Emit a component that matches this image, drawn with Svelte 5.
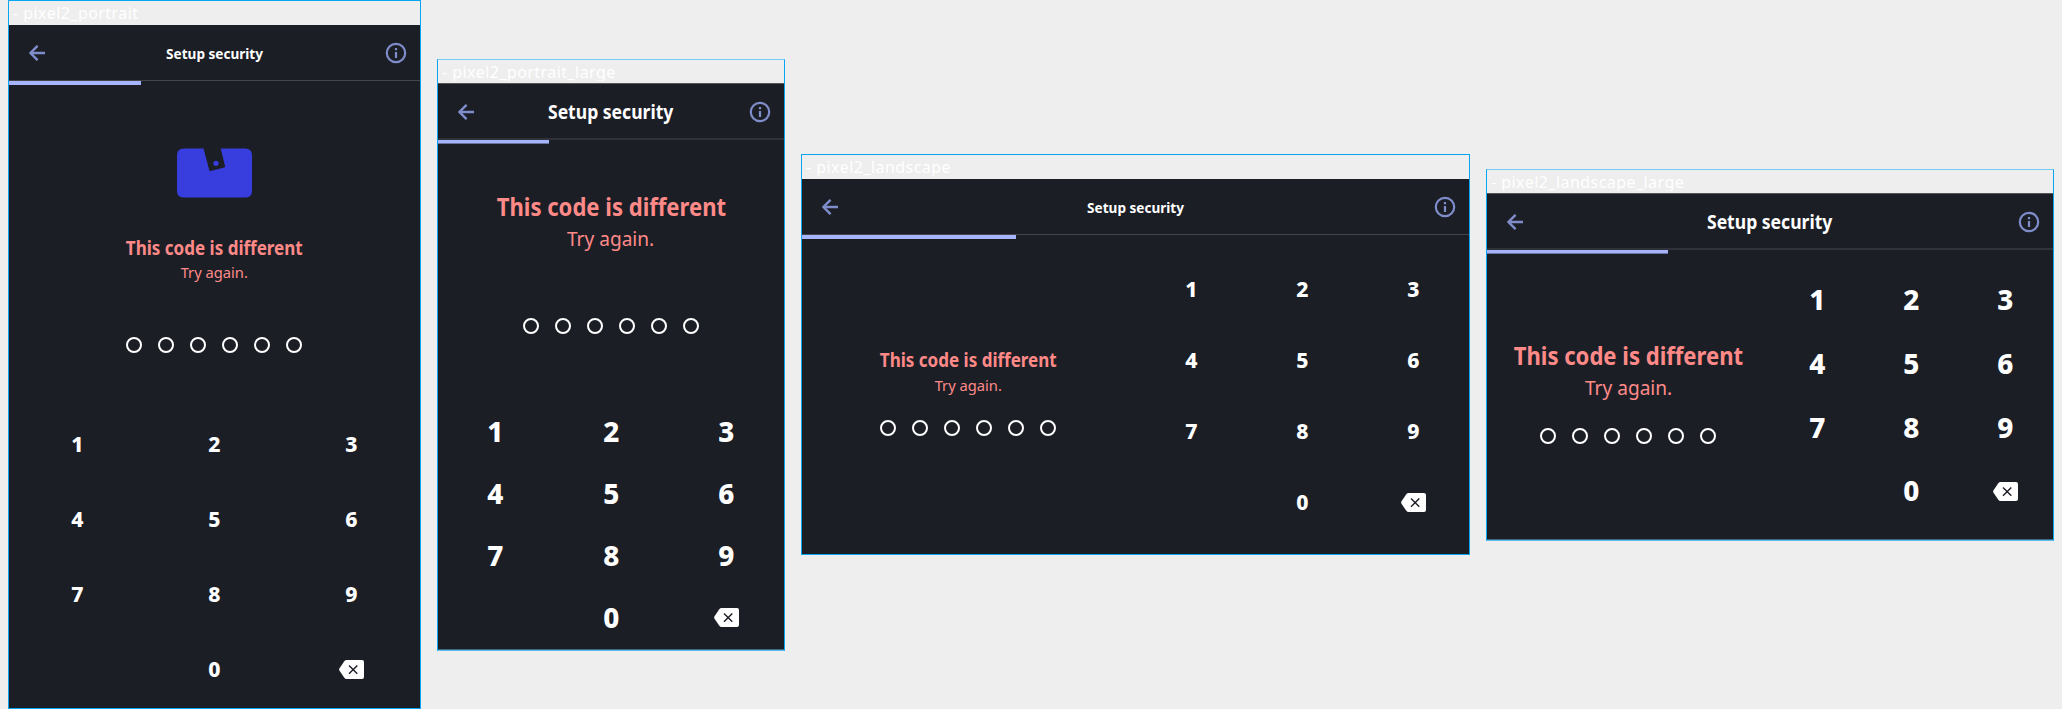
<script>
  const screens = [
    { name: 'pixel2_portrait', width: 413, height: 709, layout: 'portrait', large: false, progress: 132, illustration: true },
    { name: 'pixel2_portrait_large', width: 348, height: 592, layout: 'portrait', large: true, progress: 111, illustration: false },
    { name: 'pixel2_landscape', width: 669, height: 401, layout: 'landscape', large: false, progress: 213.7, illustration: false },
    { name: 'pixel2_landscape_large', width: 568, height: 372, layout: 'landscape', large: true, progress: 181, illustration: false },
  ];
  const keys = ['1', '2', '3', '4', '5', '6', '7', '8', '9', '', '0', 'back'];
  const dots = [0, 1, 2, 3, 4, 5];
</script>

<main class="gallery">
  {#each screens as s}
    <section class="frame {s.layout}" class:large={s.large} style="width:{s.width}px;height:{s.height}px">
      <div class="label"><span>- {s.name}</span></div>
      <div class="screen">
        <header>
          <svg class="arrow" viewBox="0 0 16 16" width="16" height="16" aria-hidden="true">
            <path d="M8.6.8 1.4 8l7.2 7.2M1.6 8H16" fill="none" stroke="currentColor" stroke-width="2.4" />
          </svg>
          <h1><span>Setup security</span></h1>
          <svg class="info" viewBox="0 0 22 22" width="22" height="22" aria-hidden="true">
            <circle cx="11" cy="11" r="9.2" fill="none" stroke="currentColor" stroke-width="2.2" />
            <path d="M9.900 10h2.200v6.100h-2.200zM9.900 6h2.200v2.200h-2.200z" fill="currentColor" />
          </svg>
        </header>
        <div class="track"><div class="bar" style="width:{s.progress}px"></div></div>
        <div class="body">
          <div class="prompt">
            {#if s.illustration}
              <svg class="wallet" viewBox="0 0 75 50" width="75" height="50" aria-hidden="true">
                <path d="M7 .4H26.500L32.300 22.200Q32.600 23.200 33.600 23L47.200 19.500Q48.300 19.200 48 18.100L43.700.4H68Q75 .4 75 7V43Q75 49.600 68 49.600H7Q0 49.600 0 43V7Q0 .4 7 .4Z" fill="#383ddd" />
                <circle cx="39" cy="15.3" r="2.6" fill="#383ddd" />
              </svg>
            {/if}
            <h2><span>This code is different</span></h2>
            <p><span>Try again.</span></p>
            <div class="dots">
              {#each dots as d (d)}<i></i>{/each}
            </div>
          </div>
          <div class="keypad">
            {#each keys as k}
              <div class="key">
                {#if k === 'back'}
                  <svg class="back" viewBox="0 0 25 19" width="25" height="19" aria-hidden="true">
                    <path d="M7.6 0H23Q25 0 25 2V17Q25 19 23 19H7.6Q6.2 19 5.3 17.8L.5 10.7Q-.2 9.5.5 8.3L5.3 1.2Q6.2 0 7.6 0Z" fill="#fff" />
                    <path d="m10 5.400 8.300 8.300m0-8.300L10 13.700" fill="none" stroke="#1c1e26" stroke-width="1.4" />
                  </svg>
                {:else}<span class="digit">{k}</span>{/if}
              </div>
            {/each}
          </div>
        </div>
      </div>
    </section>
  {/each}
</main>

<style>
  :global(body) {
    background: #eee;
    overflow: hidden;
  }
  .gallery {
    display: flex;
    align-items: center;
    gap: 16px;
    height: 709px;
    padding-left: 8px;
    font-family: 'Noto Sans', sans-serif;
    color: #fff;
  }
  .frame {
    flex: none;
    box-sizing: border-box;
    display: flex;
    flex-direction: column;
    border: 1px solid #08a5f5;
  }
  .frame.large {
    margin-top: 1px;
    border-top-color: #70ccf5;
    border-bottom-color: #5cbcec;
  }
  .label {
    flex: none;
    box-sizing: border-box;
    height: 24px;
    padding-left: 4px;
    clip-path: inset(0 0 3px 0);
    font-size: 16px;
    line-height: 24px;
    letter-spacing: 0.45px;
    white-space: nowrap;
  }
  .large .label { height: 23px; clip-path: inset(0 0 2px 0); }
  .screen {
    flex: 1;
    min-height: 0;
    display: flex;
    flex-direction: column;
    background: #1c1e26;
  }
  .large .screen { border-top: 1px solid #55575d; border-bottom: 1px solid #3d6a88; }
  h1, h2, p { margin: 0; white-space: nowrap; }
  h1 span, h2 span, p span { display: inline-block; }
  header {
    flex: none;
    height: 55px;
    display: grid;
    grid-template-columns: 36px 1fr 36px;
    align-items: center;
    color: #7f8dcb;
  }
  .large header { height: 54px; }
  .arrow { margin: 1px 0 0 20px; }
  .large .arrow { margin-top: 2px; }
  .info { margin: 1px 0 0 1px; }
  .large .info { margin-top: 2px; }
  h1 {
    padding-top: 1px;
    font-size: 15px;
    line-height: 24px;
    text-align: center;
    color: #fff;
  }
  h1 span { transform: scaleX(0.905); }
  .large h1 { padding-top: 2px; font-size: 19.5px; }
  .large h1 span { transform: scaleX(0.9); }
  .track {
    flex: none;
    height: 4px;
    border-top: 1px solid #43454b;
  }
  .large .track { border-top: 2px solid #30323a; }
  .bar { height: 4px; background: #a5b4fb; }
  .large .bar { background: linear-gradient(#a5b4fb 3px, #6972a0 3px); }
  .body { flex: 1; min-height: 0; display: flex; }
  .portrait .body { flex-direction: column; }
  .prompt {
    display: flex;
    flex-direction: column;
    align-items: center;
    color: #ff8a88;
  }
  .wallet { margin: 63px 0 37px; }
  h2 { font-size: 19.5px; line-height: 26px; }
  h2 span { transform: scaleX(0.873); }
  p { font-size: 15px; line-height: 24px; }
  p span { transform: scaleX(0.98); }
  .large h2 { font-size: 25.3px; line-height: 34px; }
  .large p { font-size: 19.5px; line-height: 31px; }
  .dots { display: flex; gap: 16px; padding-right: 1px; }
  .dots i {
    box-sizing: border-box;
    width: 16px;
    height: 16px;
    border: 2px solid #fff;
    border-radius: 50%;
  }
  .keypad {
    display: grid;
    grid-template-columns: repeat(3, 1fr);
    grid-auto-rows: 75px;
    font-size: 22px;
    font-weight: 800;
  }
  .large .keypad { font-size: 29px; }
  .key { display: flex; align-items: center; justify-content: center; }
  .digit { padding-bottom: 2px; transform: scaleX(0.96); }
  .back { margin-top: 2px; }
  .large .back { margin-top: 0; }

  .portrait p { line-height: 22px; padding-bottom: 2px; }
  .portrait.large p { line-height: 31px; padding-bottom: 0; }
  .portrait .dots { margin: 52px 0 53px; }
  .portrait.large .prompt { padding-top: 45px; }
  .portrait.large .dots { margin: 64px 0 66px; }
  .portrait.large .keypad { grid-auto-rows: 62px; }

  .landscape .prompt, .landscape .keypad { flex: 1 1 50%; }
  .landscape .prompt { padding-top: 108px; }
  .landscape .dots { margin-top: 23px; }
  .landscape .keypad { padding-top: 14px; grid-auto-rows: 71px; align-content: start; }
  .landscape.large .prompt { padding-top: 84px; }
  .landscape.large .dots { margin-top: 25px; }
  .landscape.large .keypad { grid-auto-rows: 63.67px; }
  .landscape.large .back { margin-top: 1px; }
</style>
